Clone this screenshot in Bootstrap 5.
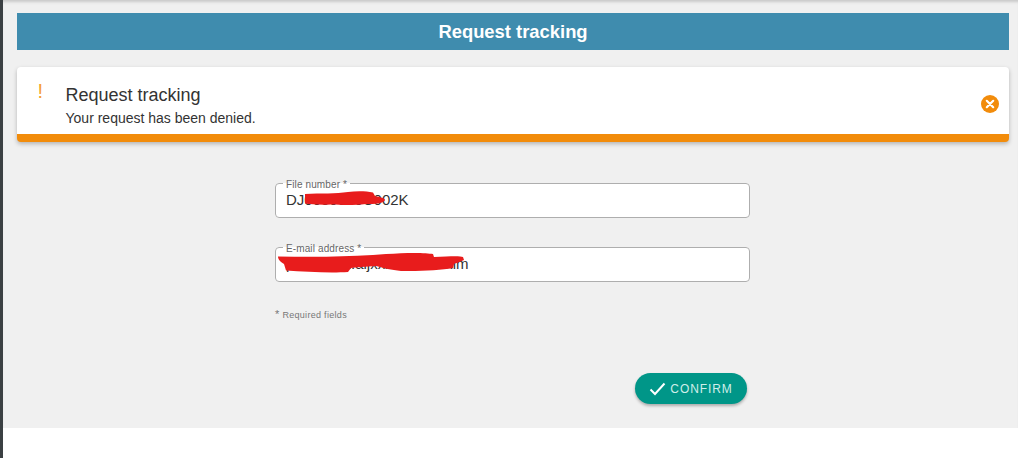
<!DOCTYPE html>
<html lang="en">
<head>
<meta charset="utf-8">
<title>Request tracking</title>
<link href="https://cdn.jsdelivr.net/npm/bootstrap@5.3.0/dist/css/bootstrap.min.css" rel="stylesheet">
<style>
html,body{height:100%;overflow:hidden}
body{background:#fff;font-family:"Liberation Sans",Arial,sans-serif;color:#333;border-left:3px solid #3b4043}
.shell{height:428px;background:#f0f0f0;padding:13px 9px 0 14px;box-shadow:inset 0 4px 3px -2px #c9c9c9}
.page-title{height:36.500px;background:#3f8cae;color:#fff;font-size:18.400px;font-weight:700;line-height:38px;text-align:center}
.notice{height:75px;margin-top:17.500px;background:#fff;border-bottom:8px solid #f28c0b;border-radius:4px;box-shadow:0 2px 4px rgba(0,0,0,.25);padding:0 10.500px 0 20.500px}
.notice-mark{width:28px;color:#f5a030;font-size:20px;line-height:1;margin-top:14px}
.notice-title{font-size:18px;line-height:21px;margin-top:17.500px}
.notice-text{font-size:14px;line-height:17px;margin-top:4.500px}
.close-disc{width:18px;height:18px;margin-top:28px}
.form-zone{width:475px;margin:36px 0 0 258px}
.req-zone{padding-top:3px}
.outline-box{position:relative;height:39.500px;background:#fff;border:1px solid #aeaeae;border-radius:4px;padding:0 10px;margin:0 0 24.500px;min-width:0}
.outline-box legend{float:none;width:auto;font-size:10px;line-height:14px;color:#666;letter-spacing:.12px;padding:0 3px;margin:0 0 0 -3px;height:10px}
.outline-box .form-control{border:0;background:transparent;padding:0;height:20px;font-size:15px;line-height:20px;color:#333;box-shadow:none;border-radius:0;margin-top:2px}
.scribble{position:absolute;left:0;top:-5px;width:475px;height:40px;pointer-events:none;overflow:visible}
.req-note{font-size:9px;line-height:11px;color:#777;letter-spacing:.3px}
.req-star{font-size:11px}
.confirm-row{width:472px;margin-top:52px}
.btn-confirm{--bs-btn-bg:#009688;--bs-btn-hover-bg:#009688;--bs-btn-active-bg:#009688;--bs-btn-color:#cfeee9;--bs-btn-hover-color:#cfeee9;--bs-btn-border-width:0;width:112px;height:31px;padding:0;border-radius:16px;font-size:12px;letter-spacing:.9px;box-shadow:0 2px 3px rgba(0,0,0,.28);gap:4px}
.btn-confirm svg{width:17px;height:14px}
</style>
</head>
<body>
<main class="shell">
  <h1 class="page-title m-0">Request tracking</h1>
  <section class="notice d-flex">
    <div class="notice-mark">!</div>
    <div class="flex-grow-1">
      <div class="notice-title">Request tracking</div>
      <div class="notice-text">Your request has been denied.</div>
    </div>
    <svg class="close-disc" viewBox="0 0 18 18" aria-hidden="true"><circle cx="9" cy="9" r="9" fill="#f28c0b"/><path d="M5.800 5.800l6.400 6.400M12.200 5.800l-6.400 6.400" stroke="#fff" stroke-width="2.200" stroke-linecap="round"/></svg>
  </section>
  <form class="form-zone">
    <fieldset class="outline-box">
      <legend>File number *</legend>
      <input class="form-control" type="text" value="DJ0000000C002K" aria-label="File number">
      <svg class="scribble" viewBox="0 0 475 40" aria-hidden="true"><path d="M29 11C45 10 60 11 72 9C80 8 90 8 97 9.500L99 13C104 14 109 15 109 17C108 20 100 21.500 90 21C78 22.500 65 22 55 21.500C45 22 35 21.500 29 20.500Z" fill="#e81c1c"/></svg>
    </fieldset>
    <fieldset class="outline-box">
      <legend>E-mail address *</legend>
      <input class="form-control" type="text" value="p.xxxxxxx.aljxxxxxxxxxxxlm" aria-label="E-mail address">
      <svg class="scribble" viewBox="0 0 475 40" aria-hidden="true"><path d="M2 9.500C40 10 75 10 110 7C130 5.500 150 5.500 157 7L158 10L170 9.500C178 9 185 9 187 10L188 13C184 15 180 16 178 17L177 21C165 23 145 24.500 125 24C115 23 108 21 100 19C90 20 80 20 75 21L72 25C55 26 30 25 10 23.500L8 17C5 15 2 13 2 9.500Z" fill="#e81c1c"/></svg>
    </fieldset>
  </form>
  <div class="form-zone req-zone mt-0">
    <p class="req-note mb-0"><span class="req-star">*</span> Required fields</p>
    <div class="confirm-row d-flex justify-content-end">
      <button type="button" class="btn btn-confirm d-inline-flex align-items-center justify-content-center">
        <svg viewBox="0 0 17 14" aria-hidden="true"><path d="M1.500 7.500L6 12L15.500 1.500" fill="none" stroke="#fff" stroke-width="2"/></svg>CONFIRM
      </button>
    </div>
  </div>
</main>
<script src="https://cdn.jsdelivr.net/npm/bootstrap@5.3.0/dist/js/bootstrap.bundle.min.js"></script>
</body>
</html>
